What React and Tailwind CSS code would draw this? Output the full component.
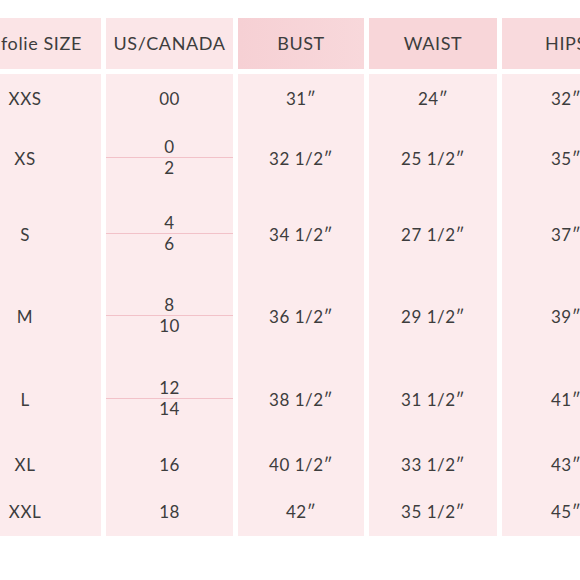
const rows = [
  { size: "XXS", us: ["00"], bust: "31″", waist: "24″", hips: "32″", h: "h-[49px]" },
  { size: "XS", us: ["0", "2"], bust: "32 1/2″", waist: "25 1/2″", hips: "35″", h: "h-[72px]" },
  { size: "S", us: ["4", "6"], bust: "34 1/2″", waist: "27 1/2″", hips: "37″", h: "h-[80px]" },
  { size: "M", us: ["8", "10"], bust: "36 1/2″", waist: "29 1/2″", hips: "39″", h: "h-[83px]" },
  { size: "L", us: ["12", "14"], bust: "38 1/2″", waist: "31 1/2″", hips: "41″", h: "h-[84px]" },
  { size: "XL", us: ["16"], bust: "40 1/2″", waist: "33 1/2″", hips: "43″", h: "h-[46px]" },
  { size: "XXL", us: ["18"], bust: "42″", waist: "35 1/2″", hips: "45″", h: "h-[48px]" },
];

function Column({ width, header, headerClass, children }) {
  return (
    <div className={`flex shrink-0 flex-col ${width}`}>
      <div className={`flex h-[51px] items-center text-[18px] tracking-[0.6px] ${headerClass}`}>{header}</div>
      <div className="mt-[5px] flex flex-col bg-[#fcebed]">{children}</div>
    </div>
  );
}

function Cell({ h, children, className = "" }) {
  return <div className={`flex items-center justify-center ${h} ${className}`}>{children}</div>;
}

export default function App() {
  return (
    <div
      className="h-[580px] w-[580px] overflow-hidden bg-white pt-[18px] text-[17px] tracking-[0.5px] text-[#3d3d3d]"
      style={{ fontFamily: "Lato, 'DejaVu Sans', sans-serif" }}
    >
      <div className="flex gap-x-[5px]">
        <Column width="w-[101px]" header={<span className="whitespace-nowrap pl-[1px]">folie SIZE</span>} headerClass="bg-[#fbe4e6]">
          {rows.map((r) => (
            <div key={r.size} className={`flex items-center ${r.h}`}>
              <span className="w-[50px] text-center">{r.size}</span>
            </div>
          ))}
        </Column>
        <Column width="w-[127px]" header={<span className="w-full text-center">US/CANADA</span>} headerClass="bg-[#fbe6e8]">
          {rows.map((r) =>
            r.us.length === 1 ? (
              <Cell key={r.size} h={r.h}>{r.us[0]}</Cell>
            ) : (
              <Cell key={r.size} h={r.h}>
                <div className="mb-[3px] flex w-full flex-col items-center">
                  <span className="leading-[20px]">{r.us[0]}</span>
                  <div className="h-px w-full bg-[#f2c2c9]" />
                  <span className="leading-[20px]">{r.us[1]}</span>
                </div>
              </Cell>
            )
          )}
        </Column>
        <Column width="w-[126px]" header={<span className="w-full text-center">BUST</span>} headerClass="bg-gradient-to-r from-[#f6d0d4] to-[#f8d8db]">
          {rows.map((r) => (
            <Cell key={r.size} h={r.h}>{r.bust}</Cell>
          ))}
        </Column>
        <Column width="w-[128px]" header={<span className="w-full text-center">WAIST</span>} headerClass="bg-[#f8d6d9]">
          {rows.map((r) => (
            <Cell key={r.size} h={r.h}>{r.waist}</Cell>
          ))}
        </Column>
        <Column width="w-[128px]" header={<span className="w-full text-center">HIPS</span>} headerClass="bg-[#f9dadd]">
          {rows.map((r) => (
            <Cell key={r.size} h={r.h}>{r.hips}</Cell>
          ))}
        </Column>
      </div>
    </div>
  );
}
